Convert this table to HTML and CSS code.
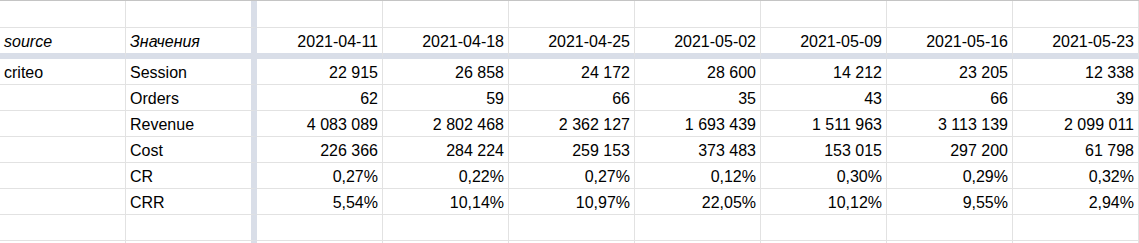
FILE: index.html
```html
<!DOCTYPE html>
<html lang="ru">
<head>
<meta charset="utf-8">
<title>Pivot</title>
<link rel="stylesheet" href="styles.css">
</head>
<body>
<div class="sheet">
  <div class="row row-top">
    <div class="c c-a"></div><div class="c c-b"></div>
    <div class="c"></div><div class="c"></div><div class="c"></div><div class="c"></div><div class="c"></div><div class="c"></div><div class="c"></div>
  </div>
  <div class="row row-head">
    <div class="c c-a it">source</div><div class="c c-b it">Значения</div>
    <div class="c n">2021-04-11</div><div class="c n">2021-04-18</div><div class="c n">2021-04-25</div><div class="c n">2021-05-02</div><div class="c n">2021-05-09</div><div class="c n">2021-05-16</div><div class="c n">2021-05-23</div>
  </div>
  <div class="row">
    <div class="c c-a">criteo</div><div class="c c-b">Session</div>
    <div class="c n">22 915</div><div class="c n">26 858</div><div class="c n">24 172</div><div class="c n">28 600</div><div class="c n">14 212</div><div class="c n">23 205</div><div class="c n">12 338</div>
  </div>
  <div class="row">
    <div class="c c-a"></div><div class="c c-b">Orders</div>
    <div class="c n">62</div><div class="c n">59</div><div class="c n">66</div><div class="c n">35</div><div class="c n">43</div><div class="c n">66</div><div class="c n">39</div>
  </div>
  <div class="row">
    <div class="c c-a"></div><div class="c c-b">Revenue</div>
    <div class="c n">4 083 089</div><div class="c n">2 802 468</div><div class="c n">2 362 127</div><div class="c n">1 693 439</div><div class="c n">1 511 963</div><div class="c n">3 113 139</div><div class="c n">2 099 011</div>
  </div>
  <div class="row">
    <div class="c c-a"></div><div class="c c-b">Cost</div>
    <div class="c n">226 366</div><div class="c n">284 224</div><div class="c n">259 153</div><div class="c n">373 483</div><div class="c n">153 015</div><div class="c n">297 200</div><div class="c n">61 798</div>
  </div>
  <div class="row">
    <div class="c c-a"></div><div class="c c-b">CR</div>
    <div class="c n">0,27%</div><div class="c n">0,22%</div><div class="c n">0,27%</div><div class="c n">0,12%</div><div class="c n">0,30%</div><div class="c n">0,29%</div><div class="c n">0,32%</div>
  </div>
  <div class="row">
    <div class="c c-a"></div><div class="c c-b">CRR</div>
    <div class="c n">5,54%</div><div class="c n">10,14%</div><div class="c n">10,97%</div><div class="c n">22,05%</div><div class="c n">10,12%</div><div class="c n">9,55%</div><div class="c n">2,94%</div>
  </div>
  <div class="row">
    <div class="c c-a"></div><div class="c c-b"></div>
    <div class="c"></div><div class="c"></div><div class="c"></div><div class="c"></div><div class="c"></div><div class="c"></div><div class="c"></div>
  </div>
  <div class="row">
    <div class="c c-a"></div><div class="c c-b"></div>
    <div class="c"></div><div class="c"></div><div class="c"></div><div class="c"></div><div class="c"></div><div class="c"></div><div class="c"></div>
  </div>
</div>
</body>
</html>
```
FILE: styles.css
```css
html, body {
  margin: 0;
  padding: 0;
  background: #ffffff;
  overflow: hidden;
}
.sheet {
  width: 1139px;
  height: 243px;
  box-sizing: border-box;
  overflow: hidden;
  border-top: 1px solid #c4c4c4;
  font-family: "Liberation Sans", Arial, sans-serif;
  font-size: 16px;
  color: #000;
}
.row {
  display: grid;
  grid-template-columns: 126px 131px repeat(7, 126px);
  height: 26px;
}
.row-top {
  height: 27px;
}
.row-head {
  height: 31px;
}
.c {
  box-sizing: border-box;
  border-right: 1px solid #e2e2e2;
  border-bottom: 1px solid #e2e2e2;
  padding: 0 4px 2px 4px;
  display: flex;
  align-items: flex-end;
  line-height: 18px;
  white-space: nowrap;
  overflow: hidden;
}
.c-b {
  border-right: 6px solid #d9dee8;
}
.row-head .c {
  border-bottom: 6px solid #d9dee8;
}
.n {
  justify-content: flex-end;
}
.it {
  font-style: italic;
}
```
